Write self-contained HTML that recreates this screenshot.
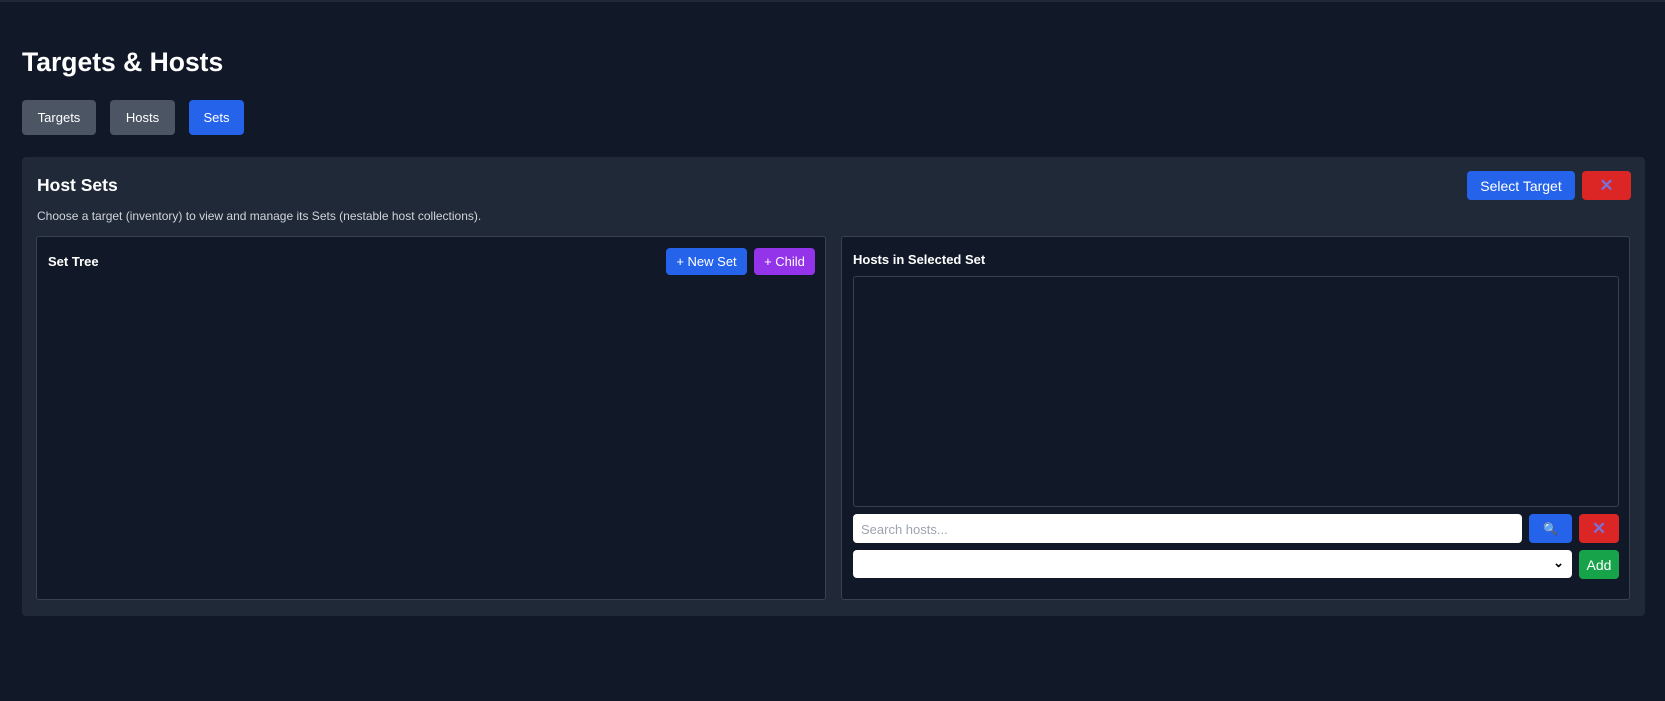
<!DOCTYPE html>
<html><head><meta charset="utf-8"><style>
*{box-sizing:border-box;margin:0;padding:0}
body{width:1665px;height:701px;background:#111827;font-family:"Liberation Sans",sans-serif;color:#fff;position:relative;overflow:hidden}
.a{position:absolute}
.btn{position:absolute;border-radius:4px;display:flex;align-items:center;justify-content:center;font-size:13px;color:#fff}
.box{position:absolute;background:#111827;border:1px solid #374151;border-radius:3px}
.x{color:#7c6fd6;font-size:17px;font-weight:bold}
</style></head><body>
<div class="a" style="left:0;top:0;width:1665px;height:2px;background:#1f2937"></div>
<div class="a" style="left:22px;top:47px;font-size:26.5px;font-weight:bold">Targets &amp; Hosts</div>
<div class="btn" style="left:22px;top:100px;width:74px;height:35px;background:#4b5563">Targets</div>
<div class="btn" style="left:110px;top:100px;width:65px;height:35px;background:#4b5563">Hosts</div>
<div class="btn" style="left:189px;top:100px;width:55px;height:35px;background:#2563eb">Sets</div>
<div class="a" style="left:22px;top:157px;width:1623px;height:459px;background:#1f2937;border-radius:4px"></div>
<div class="a" style="left:37px;top:175px;font-size:17.5px;font-weight:bold">Host Sets</div>
<div class="a" style="left:37px;top:209px;font-size:12px;color:#d1d5db">Choose a target (inventory) to view and manage its Sets (nestable host collections).</div>
<div class="btn" style="left:1467px;top:171px;width:108px;height:29px;background:#2563eb;font-size:14px">Select Target</div>
<div class="btn x" style="left:1582px;top:171px;width:49px;height:29px;background:#dc2626">✕</div>
<div class="box" style="left:36px;top:236px;width:790px;height:364px"></div>
<div class="a" style="left:48px;top:254px;font-size:13px;font-weight:bold">Set Tree</div>
<div class="btn" style="left:666px;top:248px;width:81px;height:27px;background:#2563eb">+ New Set</div>
<div class="btn" style="left:754px;top:248px;width:61px;height:27px;background:#9333ea">+ Child</div>
<div class="box" style="left:841px;top:236px;width:789px;height:364px"></div>
<div class="a" style="left:853px;top:252px;font-size:13px;font-weight:bold">Hosts in Selected Set</div>
<div class="box" style="left:853px;top:276px;width:766px;height:231px"></div>
<div class="a" style="left:853px;top:514px;width:669px;height:29px;background:#fff;border-radius:4px;color:#9ca3af;font-size:13px;padding:8px 8px">Search hosts...</div>
<div class="btn" style="left:1529px;top:514px;width:43px;height:29px;background:#2563eb;font-size:12px">🔍</div>
<div class="btn x" style="left:1579px;top:514px;width:40px;height:29px;background:#dc2626">✕</div>
<div class="a" style="left:853px;top:550px;width:719px;height:28px;background:#fff;border-radius:4px"><span style="position:absolute;right:8px;top:5px;color:#000;font-size:13px;font-weight:bold">⌄</span></div>
<div class="btn" style="left:1579px;top:550px;width:40px;height:29px;background:#16a34a;font-size:14px">Add</div>
</body></html>
